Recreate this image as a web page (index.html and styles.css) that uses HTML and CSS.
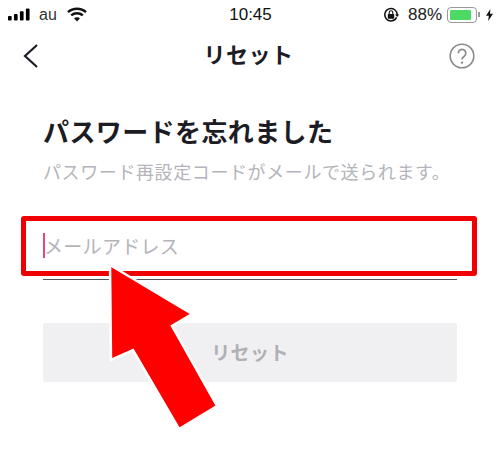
FILE: index.html
```html
<!DOCTYPE html>
<html lang="ja">
<head>
  <meta charset="UTF-8" />
  <title>リセット</title>
  <link rel="stylesheet" href="styles.css">
</head>
<body>
  <div class="status">
    <div class="status-left">
      <svg class="signal" width="22" height="14" viewBox="0 0 24 14">
        <rect x="0" y="8" width="4" height="5" rx="1"/>
        <rect x="6.5" y="6" width="4" height="7" rx="1"/>
        <rect x="13" y="3" width="4" height="10" rx="1"/>
        <rect x="19.5" y="0" width="4" height="13" rx="1"/>
      </svg>
      <span class="carrier">au</span>
      <svg class="wifi" width="20" height="15" viewBox="0 0 20 15">
        <path d="M1 5.2C6 .6 14 .6 19 5.2" fill="none" stroke="#111" stroke-width="2.4"/>
        <path d="M4.2 8.4C7.4 5.6 12.6 5.6 15.8 8.4" fill="none" stroke="#111" stroke-width="2.4"/>
        <path d="M7 11.2C8.8 9.8 11.2 9.8 13 11.2L10 14.6Z" fill="#111"/>
      </svg>
    </div>
    <div class="time">10:45</div>
    <div class="status-right">
      <svg class="lock" width="16" height="16" viewBox="0 0 16 16">
        <path d="M13.6 10.4A6.2 6.2 0 1 1 14.2 8" fill="none" stroke="#111" stroke-width="1.5"/>
        <path d="M12 7.4h4.2L14.2 10Z" fill="#111"/>
        <rect x="4.8" y="7" width="6.4" height="4.8" rx=".8" fill="#111"/>
        <path d="M6.2 7V5.6a1.8 1.8 0 0 1 3.6 0V7" fill="none" stroke="#111" stroke-width="1.1"/>
      </svg>
      <span class="percent">88%</span>
      <div class="battery"><div class="battery-level" style="width: 88%"></div></div>
      <div class="battery-tip"></div>
      <svg class="bolt" width="7" height="12" viewBox="0 0 7 12">
        <path d="M4.4 0L0 6.8h2.8L2.2 12 7 4.8H4Z" fill="#111"/>
      </svg>
    </div>
  </div>

  <div class="nav">
    <svg class="back" width="18" height="26" viewBox="0 0 18 26">
      <path d="M15 2L3 13l12 11" fill="none" stroke="#1c1c24" stroke-width="2.2"/>
    </svg>
    <div class="nav-title">リセット</div>
    <svg class="help" width="26" height="26" viewBox="0 0 26 26">
      <circle cx="13" cy="13" r="11.8" fill="none" stroke="#8a8a8a" stroke-width="1.6"/>
      <path d="M9.2 10.2a3.8 3.8 0 1 1 6 3.1c-1.4 1-2.2 1.6-2.2 3.2" fill="none" stroke="#8a8a8a" stroke-width="1.7"/>
      <circle cx="13" cy="19.6" r="1.2" fill="#8a8a8a"/>
    </svg>
  </div>

  <div class="content">
    <h1>パスワードを忘れました</h1>
    <p class="sub">パスワード再設定コードがメールで送られます。</p>
    <div class="field">
      <span class="caret"></span>
      <span class="placeholder">メールアドレス</span>
    </div>
    <div class="reset-btn">リセット</div>
  </div>

  <div class="highlight"></div>
  <svg class="arrow" width="500" height="472" viewBox="0 0 500 472">
    <polygon points="110,265 192,314 172,326 217,406 179,429 133,350 111,360" fill="#fe0000" stroke="#fff" stroke-width="2.5"/>
  </svg>
</body>
</html>
```

FILE: styles.css
```css
* {
  box-sizing: border-box;
}

body {
  margin: 0;
  width: 500px;
  height: 472px;
  position: relative;
  overflow: hidden;
  background: #fff;
  color: #1c1c24;
  font-family: "Noto Sans CJK JP", "Liberation Sans", sans-serif;
}

.status {
  display: grid;
  grid-template-columns: 1fr auto 1fr;
  align-items: center;
  height: 28px;
  padding: 1px 7px 0 8px;
  color: #111;
  font-family: "Liberation Sans", sans-serif;
  font-size: 16px;
}

.status-left {
  display: flex;
  align-items: center;
}

.carrier {
  margin-left: 9px;
  color: #333;
}

.wifi {
  margin-left: 10px;
}

.time {
  font-size: 17px;
}

.status-right {
  display: flex;
  align-items: center;
  justify-content: flex-end;
}

.percent {
  margin-left: 9px;
  font-size: 17px;
  color: #222;
}

.battery {
  width: 30px;
  height: 16px;
  margin-left: 5px;
  padding: 2px;
  border: 1px solid #999;
  border-radius: 4px;
}

.battery-level {
  height: 100%;
  background: #4cd964;
  border-radius: 1px;
}

.battery-tip {
  width: 2px;
  height: 5px;
  margin-left: 1px;
  background: #999;
}

.bolt {
  margin-left: 6px;
}

.nav {
  display: grid;
  grid-template-columns: 1fr auto 1fr;
  align-items: center;
  height: 54px;
  padding: 2px 25px 0 22px;
}

.nav-title {
  margin-bottom: 6px;
  font-size: 22px;
  font-weight: 700;
  letter-spacing: 0.5px;
}

.help {
  justify-self: end;
}

.content {
  padding: 29px 43px 0;
}

h1 {
  margin: 0;
  font-size: 26px;
  line-height: 40px;
  font-weight: 700;
  letter-spacing: 0.4px;
  white-space: nowrap;
}

.sub {
  margin: 8px 0 0;
  font-size: 18px;
  line-height: 24px;
  letter-spacing: 0.6px;
  color: #b4b4ba;
  white-space: nowrap;
}

.field {
  display: flex;
  align-items: center;
  height: 56px;
  margin-top: 41px;
  padding-bottom: 13px;
  border-bottom: 1px solid #555;
}

.caret {
  width: 2px;
  height: 25px;
  background: #e8457a;
}

.placeholder {
  margin-left: -1px;
  font-size: 19px;
  letter-spacing: 0.3px;
  color: #b4b4ba;
}

.reset-btn {
  height: 59px;
  margin-top: 43px;
  line-height: 57px;
  text-align: center;
  font-size: 19px;
  font-weight: 700;
  letter-spacing: 0.4px;
  color: #b0b0b5;
  background: #f0f0f2;
  border-radius: 2px;
}

.highlight {
  position: absolute;
  left: 21px;
  top: 216px;
  width: 456px;
  height: 60px;
  border: 5px solid #f00000;
  border-radius: 3px;
}

.arrow {
  position: absolute;
  left: 0;
  top: 0;
}
```
